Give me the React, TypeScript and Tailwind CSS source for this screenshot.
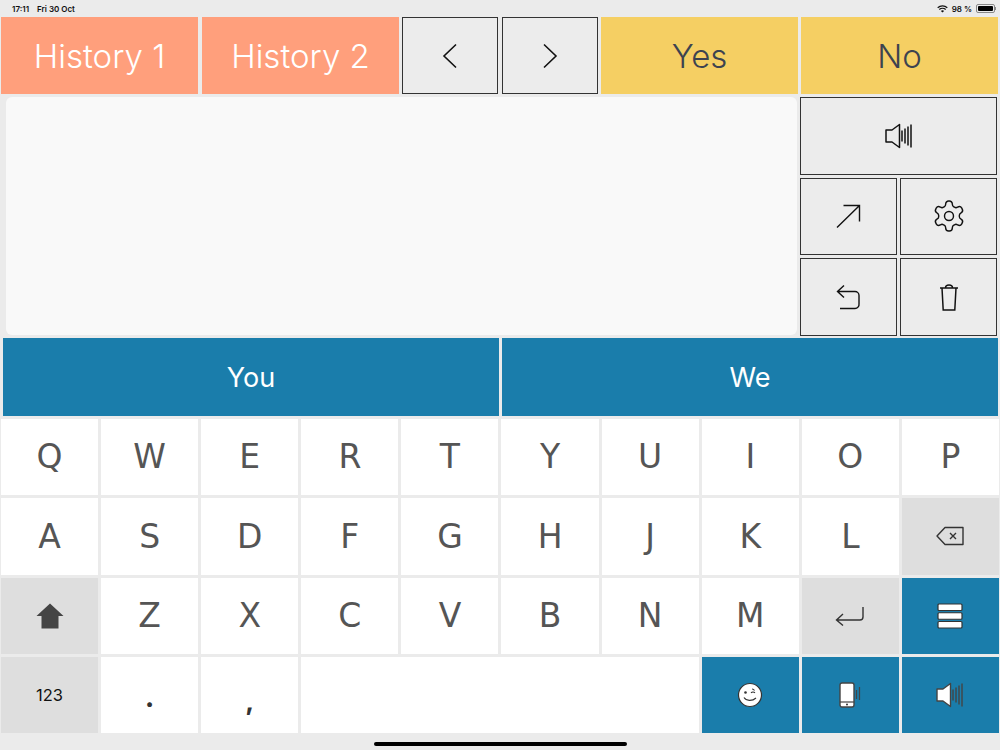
import React from "react";

const font = { fontFamily: '"Inter", "Liberation Sans", sans-serif' };

const Speaker = ({ fill = "none", stroke = "#111", w = 1.5 }: { fill?: string; stroke?: string; w?: number }) => (
  <svg width="28" height="26" viewBox="0 0 28 26" fill="none">
    <path d="M1 7h6L14.500 1.500v23L7 19H1z" fill={fill} stroke={stroke} strokeWidth={w} strokeLinejoin="round" />
    <path d="M17 7.500v11M20 5.500v15M23 3.500v19M26 1.500v23" stroke={stroke} strokeWidth={w} />
  </svg>
);

const Ctrl = ({ children, className = "" }: { children: React.ReactNode; className?: string }) => (
  <div className={`flex items-center justify-center border border-[#333] bg-[#ececec] ${className}`}>{children}</div>
);

const Key = ({ label }: { label: string }) => (
  <div style={{ fontFamily: '"DejaVu Sans", sans-serif' }} className="flex items-center justify-center bg-white text-[33px] font-normal text-[#555555]">{label}</div>
);

const Gray = ({ children }: { children: React.ReactNode }) => (
  <div className="flex items-center justify-center bg-[#dedede]">{children}</div>
);

const Blue = ({ children }: { children: React.ReactNode }) => (
  <div className="flex items-center justify-center bg-[#1a7dab]">{children}</div>
);

export default function App() {
  const r1 = "QWERTYUIOP".split("");
  const r2 = "ASDFGHJKL".split("");
  const r3 = "ZXCVBNM".split("");
  return (
    <div style={font} className="flex h-[750px] w-[1000px] flex-col overflow-hidden bg-[#ebebeb]">
      <div className="flex h-[17px] items-center justify-between pl-[12px] pr-[4px] text-[8px] font-semibold text-[#111]">
        <div className="flex gap-[8px]">
          <span>17:11</span>
          <span>Fri 30 Oct</span>
        </div>
        <div className="flex items-center gap-[4px]">
          <svg width="11" height="8" viewBox="0 0 11 8" fill="none" stroke="#111" strokeWidth="1.2">
            <path d="M.7 2.800a7 7 0 0 1 9.600 0M2.300 4.500a4.700 4.700 0 0 1 6.400 0" />
            <path d="M5.500 7.600 3.900 6a2.300 2.300 0 0 1 3.200 0z" fill="#111" stroke="none" />
          </svg>
          <span>98 %</span>
          <div className="flex items-center">
            <div className="rounded-[2px] border border-[#888] p-[1px]">
              <div className="h-[5px] w-[15px] rounded-[1px] bg-black" />
            </div>
            <div className="h-[3px] w-[1px] bg-[#888]" />
          </div>
        </div>
      </div>

      <div className="flex h-[77px] pl-[1px]">
        <div className="flex w-[197px] items-center justify-center bg-[#ff9f7c] pt-[3px] text-[33px] font-light text-white">History 1</div>
        <div className="ml-[4px] flex w-[197px] items-center justify-center bg-[#ff9f7c] pt-[3px] text-[33px] font-light text-white">History 2</div>
        <Ctrl className="ml-[3px] w-[96px]">
          <svg width="16" height="26" viewBox="0 0 16 26" fill="none" stroke="#111" strokeWidth="1.6"><path d="M14 1.500 2 13l12 11.500" /></svg>
        </Ctrl>
        <Ctrl className="ml-[4px] w-[96px]">
          <svg width="16" height="26" viewBox="0 0 16 26" fill="none" stroke="#111" strokeWidth="1.6"><path d="M2 1.500 14 13 2 24.500" /></svg>
        </Ctrl>
        <div className="ml-[3px] flex w-[197px] items-center justify-center bg-[#f5cf63] pt-[2px] text-[33px] font-light text-[#3d4350]">Yes</div>
        <div className="ml-[3px] flex w-[197px] items-center justify-center bg-[#f5cf63] pt-[2px] text-[33px] font-light text-[#3d4350]">No</div>
      </div>

      <div className="mt-[3px] flex h-[239px] pl-[6px]">
        <div className="h-[238px] w-[791px] rounded-[6px] bg-[#f9f9f9]" />
        <div className="ml-[3px] grid w-[197px] grid-cols-2 grid-rows-3 gap-x-[3px] gap-y-[3px]">
          <Ctrl className="col-span-2">
            <Speaker />
          </Ctrl>
          <Ctrl>
            <svg width="25" height="24" viewBox="0 0 25 24" fill="none" stroke="#111" strokeWidth="1.4"><path d="M1 23.500 23.500 1.500M7.500 1.500h16v16" /></svg>
          </Ctrl>
          <Ctrl>
            <svg width="36" height="36" viewBox="0 0 24 24" fill="none" stroke="#111" strokeWidth="0.95" strokeLinejoin="round">
              <path d="M12.220 2h-.44a2 2 0 0 0-2 2v.180a2 2 0 0 1-1 1.730l-.43.250a2 2 0 0 1-2 0l-.150-.080a2 2 0 0 0-2.730.730l-.220.380a2 2 0 0 0 .730 2.730l.150.100a2 2 0 0 1 1 1.720v.510a2 2 0 0 1-1 1.740l-.150.090a2 2 0 0 0-.730 2.730l.220.380a2 2 0 0 0 2.730.730l.150-.080a2 2 0 0 1 2 0l.430.250a2 2 0 0 1 1 1.730V20a2 2 0 0 0 2 2h.440a2 2 0 0 0 2-2v-.180a2 2 0 0 1 1-1.730l.430-.250a2 2 0 0 1 2 0l.150.080a2 2 0 0 0 2.730-.730l.220-.390a2 2 0 0 0-.730-2.730l-.150-.080a2 2 0 0 1-1-1.740v-.500a2 2 0 0 1 1-1.740l.150-.090a2 2 0 0 0 .730-2.730l-.220-.380a2 2 0 0 0-2.730-.730l-.150.080a2 2 0 0 1-2 0l-.430-.250a2 2 0 0 1-1-1.730V4a2 2 0 0 0-2-2z" />
              <circle cx="12" cy="12" r="3" />
            </svg>
          </Ctrl>
          <Ctrl>
            <svg width="25" height="26" viewBox="0 0 25 26" fill="none" stroke="#111" strokeWidth="1.4"><path d="M8 1.500 1.500 7.500l6.500 6M1.500 7.500H19a4 4 0 0 1 4 4V20a4 4 0 0 1-4 4.500H4" /></svg>
          </Ctrl>
          <Ctrl>
            <svg width="20" height="28" viewBox="0 0 20 28" fill="none" stroke="#111" strokeWidth="1.5"><path d="M1 5h18M3 5l1.200 22h11.600L17 5M6.500 5c0-4 7-4 7 0" /></svg>
          </Ctrl>
        </div>
      </div>

      <div className="mt-[2px] grid h-[78px] grid-cols-2 gap-x-[3px] pl-[3px] pr-[2px]">
        <div className="flex items-center justify-center bg-[#1a7dab] pt-[2px] text-[27px] font-normal text-white">You</div>
        <div className="flex items-center justify-center bg-[#1a7dab] pt-[2px] text-[27px] font-normal text-white">We</div>
      </div>

      <div className="mt-[3px] grid h-[314px] grid-cols-10 grid-rows-4 gap-x-[3px] gap-y-[3px] pl-[1px] pr-[1px]">
        {r1.map((l) => <Key key={l} label={l} />)}
        {r2.map((l) => <Key key={l} label={l} />)}
        <Gray>
          <svg width="28" height="20" viewBox="0 0 28 20" fill="none" stroke="#333" strokeWidth="1.4" strokeLinejoin="round">
            <path d="M1 10 9 1.500h18V18.500H9z" />
            <path d="m14 7 6 6M20 7l-6 6" />
          </svg>
        </Gray>
        <Gray>
          <svg width="28" height="26" viewBox="0 0 28 26" fill="#444"><path d="M14 .5 27.500 13H22.500v12.500H5.500V13H.5z" /></svg>
        </Gray>
        {r3.map((l) => <Key key={l} label={l} />)}
        <Gray>
          <svg width="30" height="20" viewBox="0 0 30 20" fill="none" stroke="#333" strokeWidth="1.4"><path d="M8 8 1.500 14 8 19.500M1.500 14H25a3 3 0 0 0 3-3V1" /></svg>
        </Gray>
        <Blue>
          <svg width="26" height="26" viewBox="0 0 26 26" fill="white" stroke="#333" strokeWidth="1.2">
            <rect x="1" y="1" width="24" height="6.500" rx="1" />
            <rect x="1" y="9.750" width="24" height="6.500" rx="1" />
            <rect x="1" y="18.500" width="24" height="6.500" rx="1" />
          </svg>
        </Blue>
        <Gray>
          <span className="text-[16.500px] font-normal text-[#111]">123</span>
        </Gray>
        <div className="flex items-end justify-center bg-white pb-[22px] text-[26px] font-extrabold leading-none text-[#333]">.</div>
        <div className="flex items-end justify-center bg-white pb-[19px] text-[24px] font-extrabold leading-none text-[#333]">,</div>
        <div className="col-span-4 bg-white" />
        <Blue>
          <svg width="26" height="26" viewBox="0 0 26 26" fill="none">
            <circle cx="13" cy="13" r="11.500" fill="white" stroke="#333" strokeWidth="1.2" />
            <circle cx="8.500" cy="10.500" r="1.300" fill="#333" />
            <path d="M14 10.800c1-1 3-1 4 0M15 7c1 0 2 .6 2.500 1.500M7 15.500c2 3.500 8 4 12 .5" stroke="#333" strokeWidth="1.1" />
          </svg>
        </Blue>
        <Blue>
          <svg width="22" height="26" viewBox="0 0 22 26" fill="none">
            <rect x="1" y="1" width="14" height="24" rx="2" fill="white" stroke="#444" strokeWidth="1.4" />
            <path d="M1 20h14" stroke="#444" strokeWidth="1.2" />
            <circle cx="8" cy="22.600" r="1" fill="#333" />
            <path d="M17.500 8v9M20.500 5v13" stroke="#444" strokeWidth="1.2" />
          </svg>
        </Blue>
        <Blue>
          <Speaker fill="white" stroke="#444" w={1.4} />
        </Blue>
      </div>

      <div className="flex flex-1 items-end justify-center pb-[4px]">
        <div className="h-[4px] w-[253px] rounded-full bg-black" />
      </div>
    </div>
  );
}
